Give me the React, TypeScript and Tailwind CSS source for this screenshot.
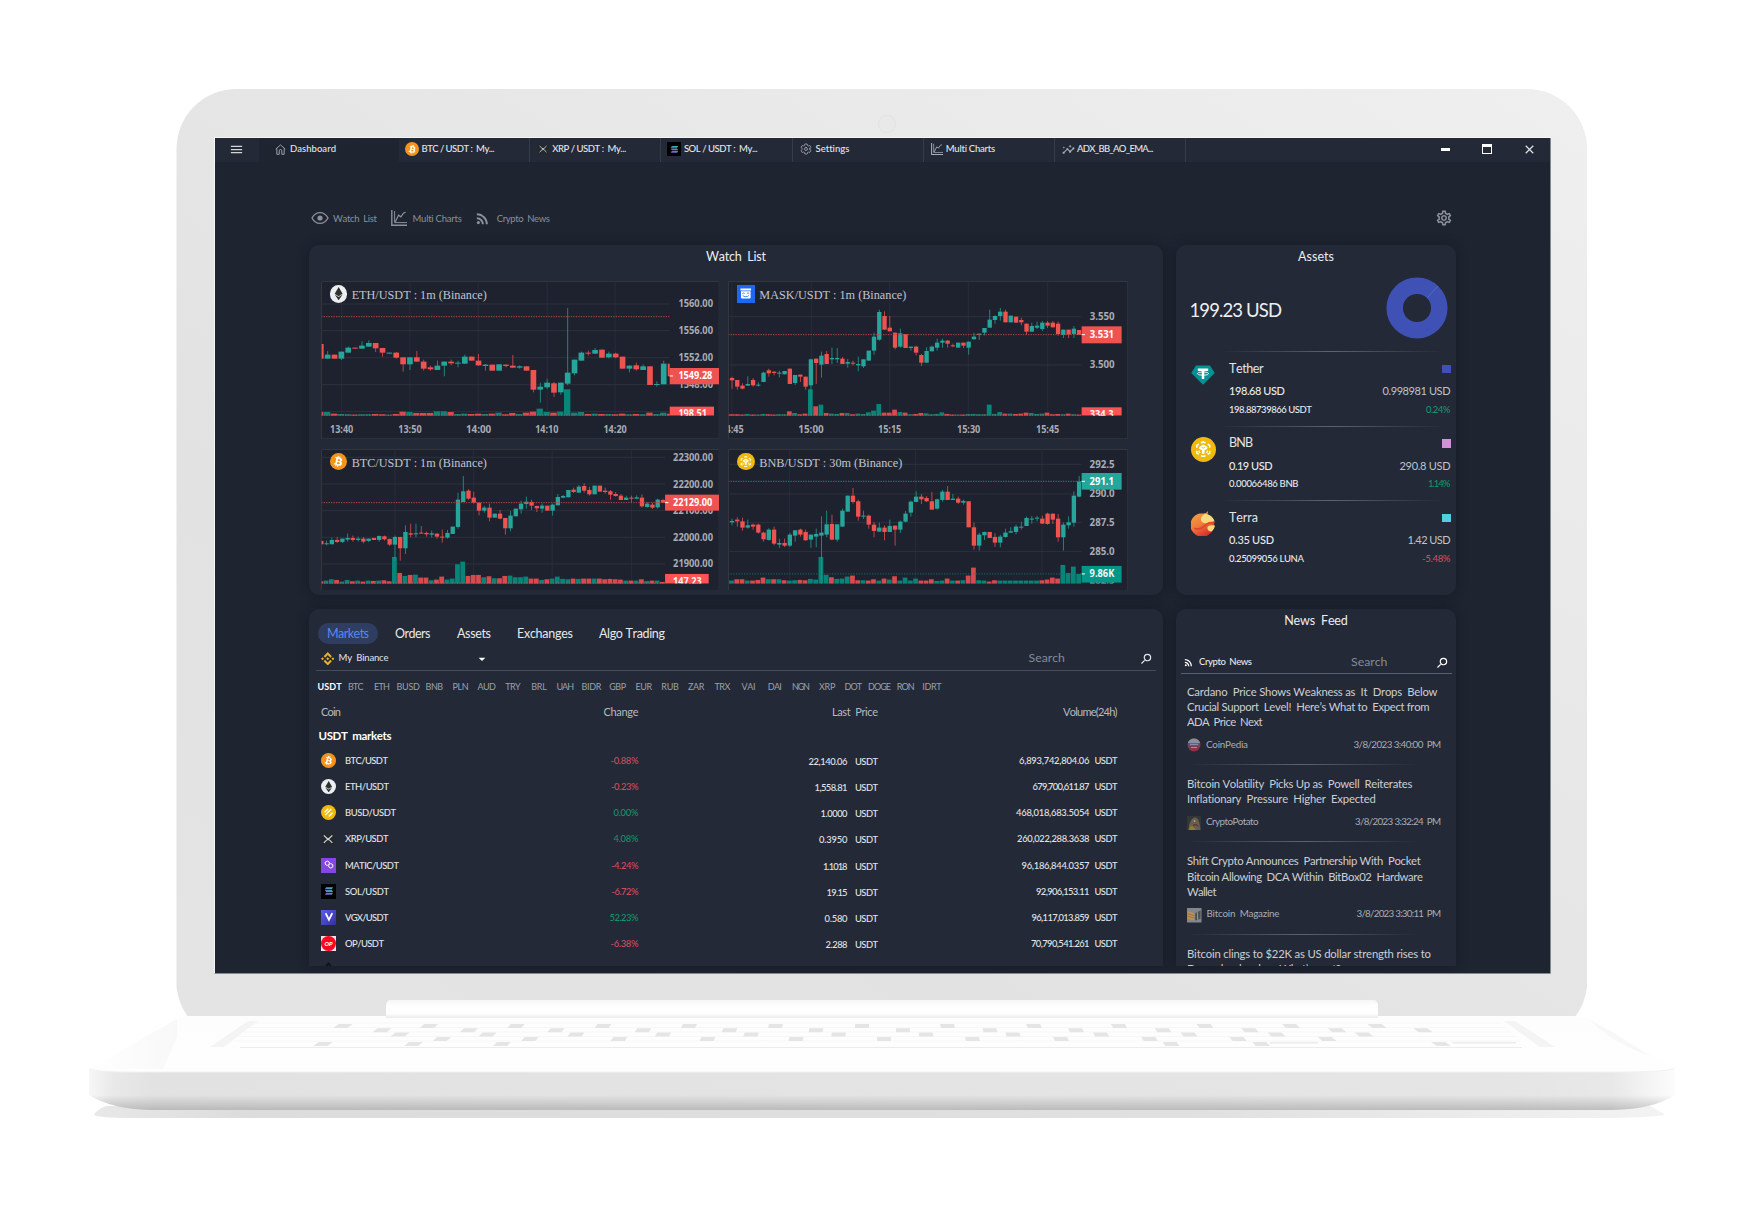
import { useLayoutEffect, useRef, type ReactNode } from "react";
import {
  MdMenu,
  MdInsights,
  MdOutlineSettings,
  MdRssFeed,
  MdSearch,
  MdArrowDropDown,
} from "react-icons/md";
import { IoSettingsOutline } from "react-icons/io5";
import { FaBtc, FaEthereum } from "react-icons/fa";

/* Text set to an exact measure: tracking is adjusted so the line fills w pixels. */
function Fit({ w, className = "", children }: { w: number; className?: string; children: string }) {
  const ref = useRef<HTMLSpanElement>(null);
  useLayoutEffect(() => {
    const el = ref.current;
    if (!el) return;
    el.style.letterSpacing = "0px";
    const natural = el.getBoundingClientRect().width;
    const gaps = Math.max(1, children.length - 1);
    const s = (w - natural) / gaps;
    el.style.letterSpacing = `${s}px`;
    el.style.marginRight = `${-s}px`;
  }, [w, children]);
  return (
    <span ref={ref} className={`inline-block shrink-0 whitespace-pre ${className}`}>
      {children}
    </span>
  );
}

/* ---------- icons ---------- */

function HomeIcon() {
  return (
    <svg viewBox="0 0 12 12" className="size-[11px] text-[#a9adb5]" fill="none" stroke="currentColor" strokeWidth="1">
      <path d="M.8 5.6 6 1l5.2 4.6M2 4.8V11.2h2.6V7.4a1.4 1.4 0 0 1 2.8 0v3.8H10V4.8" />
    </svg>
  );
}

function EyeIcon() {
  return (
    <svg viewBox="0 0 18 14" className="h-[14px] w-[18px]" fill="none" stroke="currentColor" strokeWidth="1.4">
      <path d="M1 7C3 3.4 5.8 1.6 9 1.6S15 3.4 17 7c-2 3.6-4.800 5.400-8 5.400S3 10.600 1 7Z" />
      <circle cx="9" cy="7" r="2.6" fill="currentColor" stroke="none" />
    </svg>
  );
}

function ChartIcon({ className }: { className: string }) {
  return (
    <svg viewBox="0 0 16 16" className={className} fill="none" stroke="currentColor">
      <path d="M.8 0v15.300H16" strokeWidth="1.4" />
      <path d="M3.600 1v11.600H16" strokeWidth="1" />
      <path d="M4.200 12 7.600 5.200l2.300 1.600L12.600 3l2-.6" strokeWidth="1.2" />
    </svg>
  );
}

type Coin = "btc" | "eth" | "busd" | "xrp" | "matic" | "sol" | "vgx" | "op" | "bnb" | "mask" | "tether" | "terra";

function BinanceMark({ className, color }: { className: string; color: string }) {
  return (
    <svg viewBox="0 0 24 24" className={className} fill={color}>
      <path d="m7.400 10.100 4.600-4.600 4.600 4.600 2.700-2.700L12 0 4.700 7.400zM0 12l2.700-2.700L5.400 12l-2.700 2.700zM7.400 13.900l4.600 4.600 4.600-4.600 2.700 2.700L12 24l-7.300-7.400zM18.600 12l2.700-2.700L24 12l-2.700 2.700zM14.700 12 12 9.300 9.300 12l2.700 2.700z" />
    </svg>
  );
}

function CoinIcon({ coin, size }: { coin: Coin; size: string }) {
  const box = `${size} shrink-0 flex items-center justify-center`;
  switch (coin) {
    case "btc":
      return (
        <span className={`${box} rounded-full bg-[#f7931a] text-white`}>
          <FaBtc className="size-[62%] rotate-[14deg]" />
        </span>
      );
    case "eth":
      return (
        <span className={`${box} rounded-full bg-[#eceff0] text-[#2f3030]`}>
          <FaEthereum className="size-[76%]" />
        </span>
      );
    case "busd":
      return (
        <span className={`${box} rounded-full bg-[#f0b90b]`}>
          <svg viewBox="0 0 24 24" className="size-[74%]" fill="none" stroke="#fff" strokeWidth="3">
            <path d="m3.500 11.500 8-8M5 17.500 18 4.500M12.500 20.500l8-8" />
          </svg>
        </span>
      );
    case "xrp":
      return (
        <span className={`${box} bg-[#23292f]`}>
          <svg viewBox="0 0 24 24" className="size-[68%]" fill="none" stroke="#d5d7da" strokeWidth="2.600">
            <path d="M2 3l6.500 6.400a5 5 0 0 0 7 0L22 3M2 21l6.500-6.400a5 5 0 0 1 7 0L22 21" />
          </svg>
        </span>
      );
    case "matic":
      return (
        <span className={`${box} bg-[#8247e5]`}>
          <svg viewBox="0 0 24 24" className="size-[80%]" fill="none" stroke="#fff" strokeWidth="2">
            <path d="M12.500 9.500V6.200L8.500 4 4.500 6.200v4.600L8.500 13l7-4 4 2.300v4.600l-4 2.300-4-2.300v-3.300" strokeLinejoin="round" />
          </svg>
        </span>
      );
    case "sol":
      return (
        <span className={`${box} bg-black`}>
          <svg viewBox="0 0 24 24" className="size-[66%]">
            <defs>
              <linearGradient id="sol" x1="0" y1="1" x2="1" y2="0">
                <stop offset="0" stopColor="#8a4dd8" />
                <stop offset="1" stopColor="#25c9a5" />
              </linearGradient>
            </defs>
            <path fill="url(#sol)" d="M5 3h17l-3 4.600H2zM2 9.700h17l3 4.600H5zM5 16.400h17L19 21H2z" />
          </svg>
        </span>
      );
    case "vgx":
      return (
        <span className={`${box} bg-linear-to-br from-[#5a5df5] to-[#352f9c]`}>
          <svg viewBox="0 0 24 24" className="size-[66%]" fill="none" stroke="#fff" strokeWidth="4.400">
            <path d="M4 3l8 16 8-16" />
          </svg>
        </span>
      );
    case "op":
      return (
        <span className={`${box} bg-[#f3dfe0]`}>
          <span className="flex size-full items-center justify-center rounded-full bg-[#ff0420] text-[6px] leading-none font-black text-white italic">
            OP
          </span>
        </span>
      );
    case "bnb":
      return (
        <span className={`${box} rounded-full bg-[#f0b90b]`}>
          <svg viewBox="0 0 24 24" className="size-[66%]" fill="none" stroke="#fff" strokeWidth="2.200">
            <path d="M8.700 2.900 12 1.100l3.300 1.800M2.600 9.800V6.400l3-1.700M21.400 9.800V6.400l-3-1.700M2.600 14.200v3.400l3 1.700M21.400 14.200v3.400l-3 1.700M8.700 21.100l3.300 1.800 3.300-1.800" />
            <path d="M12 5.200 18 8.600v2.600L14 13.500v4.400l-2 1.200-2-1.200v-4.400L6 11.200V8.600z" fill="#fff" stroke="none" />
            <path d="m9.500 9 2.500 1.500L14.500 9" stroke="#f0b90b" strokeWidth="1.300" />
            <path d="M6 13.800v2.200l1.600 1M18 13.800v2.200l-1.600 1" strokeWidth="1.800" />
          </svg>
        </span>
      );
    case "mask":
      return (
        <span className={`${box} bg-[#1c68f3]`}>
          <svg viewBox="0 0 24 24" className="size-[66%]">
            <path d="M1 1h22v4H1zM2 6.500h20V20a2 2 0 0 1-2 2H4a2 2 0 0 1-2-2z" fill="#fff" />
            <path d="M4.500 12c1.500-2 4-2 5.500 0M14 12c1.500-2 4-2 5.500 0M5.500 15.500c3 3.400 10 3.400 13 0" fill="none" stroke="#1c68f3" strokeWidth="1.700" />
          </svg>
        </span>
      );
    case "tether":
      return (
        <svg viewBox="0 0 24 20" className={size}>
          <path d="M5 .4h14L23.700 8 12 19.700.3 8z" fill="#009393" />
          <path d="M6.800 3.400h10.400v2.500H13.300v8.100h-2.600V5.900H6.800z" fill="#fff" />
          <ellipse cx="12" cy="8.600" rx="5.600" ry="1.600" fill="none" stroke="#fff" strokeWidth=".9" />
        </svg>
      );
    case "terra":
      return (
        <svg viewBox="0 0 24 24" className={size}>
          <defs>
            <linearGradient id="terra" x1="0" y1="0" x2=".5" y2="1">
              <stop offset="0" stopColor="#f5a848" />
              <stop offset=".6" stopColor="#ef7a3a" />
              <stop offset="1" stopColor="#d9322b" />
            </linearGradient>
          </defs>
          <path d="M12 2.400c1.500 0 3-.7 4.300-2.400.2 1.500 0 2.400-.8 3.200A11.300 11.300 0 1 1 8 2.500z" fill="url(#terra)" />
          <path d="M14 2.600a11 11 0 0 1 8.700 7.600c-3 .6-5 .6-7 1.500-2.500.8-6.200-.7-6.200-3.700 0-2.500 2-4.600 4.500-5.400Z" fill="#f7da7c" />
          <path d="M23 14c-.4 2.400-1.400 4.200-2.900 5.500-2.300.4-4.600-1.200-4.400-3.300.2-2.200 3-3.300 7.300-2.200Z" fill="#f7da7c" />
          <path d="M3 16.500c6 2.500 9-1.500 12-4 2.500-1.600 5-1.600 7.700-1.500" fill="none" stroke="#e0442f" strokeWidth="1.600" />
        </svg>
      );
  }
}

/* ---------- candlestick charts ---------- */

type Candle = [up: 0 | 1, top: number, bottom: number, high: number, low: number, vol: number];

type ChartSpec = {
  title: string;
  titleW: number;
  coin: Coin;
  box: [number, number, number, number];
  right: number;
  base: number;
  x0: number;
  step: number;
  body: number;
  h: number[];
  v: number[];
  times: [number, string][];
  prices: [number, string][];
  labelX: number;
  labelW: number;
  price: number;
  up: boolean;
  tag: { y: number; h: number; w: number; text: string };
  volTag: { y: number; h: number; w: number; text: string; tw: number };
  volLine?: number;
  lineY?: number;
  candles: Candle[];
};

const eth: Candle[] = [
  [0, 310, 354, 310, 354, 514], [1, 342, 354, 331, 354, 514], [0, 342, 354, 342, 354, 519], [1, 333, 354, 333, 358, 520],
  [1, 321, 336, 318, 336, 521], [0, 321, 324, 321, 324, 522], [1, 315, 324, 302, 325, 521], [1, 307, 318, 299, 318, 521],
  [0, 307, 323, 307, 334, 520], [0, 322, 336, 322, 348, 521], [1, 336, 339, 336, 339, 522], [0, 336, 351, 334, 354, 520],
  [0, 350, 371, 350, 393, 513], [1, 350, 371, 350, 388, 514], [0, 350, 363, 331, 363, 517], [0, 363, 384, 357, 390, 517],
  [0, 380, 386, 375, 390, 517], [1, 375, 388, 360, 388, 512], [1, 363, 375, 362, 407, 512], [0, 363, 368, 357, 374, 514],
  [1, 366, 368, 360, 380, 520], [1, 348, 369, 342, 370, 519], [0, 348, 360, 348, 360, 520], [0, 360, 374, 340, 376, 519],
  [1, 372, 376, 370, 390, 520], [0, 372, 390, 372, 390, 519], [1, 371, 390, 371, 390, 516], [0, 372, 376, 371, 380, 521],
  [0, 375, 381, 343, 381, 517], [1, 377, 381, 374, 384, 520], [0, 377, 390, 377, 390, 516], [0, 388, 447, 388, 455, 513],
  [1, 438, 447, 426, 486, 504], [1, 426, 440, 414, 445, 514], [0, 428, 456, 424, 469, 516], [1, 426, 455, 426, 462, 513],
  [1, 396, 429, 202, 434, 446], [1, 357, 398, 357, 404, 516], [1, 336, 360, 333, 360, 514], [0, 336, 339, 330, 345, 520],
  [1, 328, 339, 322, 339, 519], [0, 327, 351, 327, 351, 520], [1, 339, 350, 333, 353, 520], [0, 339, 350, 336, 353, 521],
  [0, 348, 384, 348, 384, 519], [1, 375, 384, 374, 395, 521], [0, 374, 386, 366, 390, 520], [1, 377, 388, 371, 388, 521],
  [0, 377, 433, 377, 433, 516], [1, 430, 433, 422, 438, 520], [1, 369, 431, 360, 431, 516], [0, 369, 407, 367, 407, 519],
];

const mask: Candle[] = [
  [0, 412, 419, 408, 445, 521], [0, 418, 438, 418, 447, 521], [0, 435, 444, 428, 446, 522], [1, 430, 435, 407, 435, 520],
  [0, 418, 434, 412, 438, 522], [1, 432, 435, 425, 438, 522], [1, 396, 424, 393, 424, 520], [0, 389, 398, 384, 408, 521],
  [0, 393, 397, 393, 404, 522], [1, 396, 399, 390, 410, 521], [1, 391, 401, 391, 401, 521], [0, 384, 430, 384, 430, 512],
  [1, 403, 427, 403, 433, 517], [0, 402, 408, 402, 424, 521], [0, 408, 438, 408, 447, 519], [1, 356, 434, 354, 525, 446],
  [0, 354, 367, 354, 430, 497], [1, 345, 372, 333, 411, 492], [0, 340, 370, 331, 370, 517], [1, 352, 356, 321, 370, 519],
  [1, 352, 356, 322, 367, 520], [0, 354, 370, 349, 370, 517], [1, 364, 369, 355, 381, 517], [0, 366, 369, 360, 374, 521],
  [1, 370, 374, 348, 392, 519], [1, 356, 377, 356, 382, 520], [1, 330, 360, 330, 360, 515], [1, 288, 330, 276, 342, 510],
  [1, 214, 297, 207, 300, 490], [0, 226, 267, 212, 267, 516], [0, 261, 272, 226, 272, 516], [0, 276, 321, 276, 326, 507],
  [1, 278, 318, 264, 321, 514], [0, 280, 322, 280, 322, 516], [1, 318, 322, 318, 330, 521], [0, 318, 336, 315, 344, 520],
  [0, 343, 366, 340, 376, 517], [1, 331, 366, 320, 366, 518], [1, 318, 332, 315, 332, 521], [1, 306, 321, 294, 330, 520],
  [1, 300, 306, 294, 321, 515], [0, 300, 309, 298, 321, 520], [0, 314, 317, 309, 320, 522], [1, 306, 321, 306, 321, 522],
  [0, 306, 315, 306, 322, 522], [1, 303, 321, 303, 342, 520], [1, 288, 296, 276, 296, 520], [1, 279, 283, 279, 298, 521],
  [1, 262, 276, 262, 284, 521], [1, 237, 261, 207, 261, 492], [1, 226, 238, 224, 249, 520], [1, 213, 226, 202, 240, 514],
  [0, 213, 245, 207, 245, 519], [1, 225, 245, 225, 245, 519], [0, 228, 246, 228, 246, 520], [0, 238, 245, 231, 254, 519],
  [0, 249, 273, 249, 282, 516], [1, 256, 273, 246, 273, 517], [1, 255, 261, 243, 265, 520], [1, 246, 265, 241, 271, 519],
  [0, 246, 255, 241, 262, 516], [0, 246, 260, 241, 260, 521], [0, 249, 280, 243, 285, 520], [1, 267, 283, 267, 292, 521],
  [0, 267, 282, 267, 292, 519], [1, 264, 280, 256, 292, 521], [0, 268, 283, 268, 283, 522],
];

const btc: Candle[] = [
  [0, 331, 341, 331, 341, 452], [1, 338, 341, 330, 344, 450], [1, 328, 341, 321, 341, 446], [0, 328, 334, 319, 337, 448],
  [1, 324, 334, 324, 337, 453], [1, 322, 327, 309, 333, 448], [0, 322, 328, 315, 333, 452], [1, 324, 328, 318, 333, 450],
  [0, 324, 333, 319, 338, 453], [1, 324, 331, 324, 334, 450], [0, 322, 328, 322, 328, 451], [1, 316, 328, 315, 333, 450],
  [0, 317, 326, 315, 330, 449], [0, 325, 342, 324, 346, 452], [1, 319, 342, 315, 390, 379], [0, 319, 353, 319, 390, 427],
  [1, 304, 353, 284, 370, 436], [0, 308, 312, 279, 320, 433], [1, 308, 311, 279, 320, 432], [0, 306, 309, 286, 309, 441],
  [0, 307, 311, 303, 318, 441], [1, 308, 312, 300, 321, 449], [0, 309, 318, 309, 324, 447], [0, 318, 321, 297, 336, 438],
  [1, 307, 321, 298, 324, 447], [1, 288, 310, 288, 310, 444], [1, 207, 289, 186, 294, 401], [1, 182, 214, 136, 214, 393],
  [0, 180, 204, 176, 207, 436], [0, 201, 216, 183, 219, 433], [0, 216, 240, 216, 254, 433], [1, 231, 240, 226, 246, 440],
  [0, 231, 261, 219, 272, 437], [1, 249, 261, 249, 261, 443], [0, 249, 264, 238, 266, 443], [0, 262, 293, 262, 312, 436],
  [1, 255, 293, 241, 302, 435], [1, 234, 257, 234, 257, 440], [1, 219, 236, 210, 249, 440], [1, 213, 220, 198, 234, 438],
  [0, 214, 225, 207, 238, 444], [0, 226, 233, 225, 244, 444], [1, 225, 234, 219, 246, 448], [0, 225, 240, 225, 240, 446],
  [1, 222, 240, 219, 255, 444], [1, 199, 224, 190, 224, 438], [1, 196, 201, 193, 203, 445], [1, 178, 200, 178, 200, 446],
  [0, 177, 184, 171, 187, 444], [1, 168, 186, 163, 186, 445], [0, 166, 180, 158, 186, 444], [0, 178, 191, 168, 195, 444],
  [1, 165, 191, 165, 191, 444], [0, 165, 183, 165, 183, 444], [0, 180, 184, 171, 189, 446], [0, 182, 192, 178, 207, 445],
  [0, 190, 196, 184, 198, 446], [0, 195, 208, 190, 208, 447], [1, 201, 208, 195, 208, 450], [0, 201, 204, 195, 214, 450],
  [1, 200, 204, 194, 206, 450], [0, 201, 227, 191, 231, 446], [1, 219, 229, 214, 231, 451], [0, 222, 231, 216, 235, 450],
  [1, 207, 230, 204, 234, 450], [0, 208, 217, 205, 217, 454],
];

const bnb: Candle[] = [
  [1, 271, 275, 264, 284, 450], [0, 267, 272, 260, 288, 446], [0, 272, 291, 261, 300, 446], [1, 284, 291, 267, 294, 450],
  [0, 282, 288, 279, 297, 450], [0, 282, 306, 279, 309, 448], [0, 306, 326, 303, 333, 441], [1, 297, 328, 293, 330, 446],
  [0, 297, 339, 288, 344, 446], [1, 337, 342, 324, 352, 446], [0, 337, 345, 324, 349, 449], [1, 312, 345, 307, 349, 450],
  [1, 299, 315, 299, 333, 449], [0, 297, 312, 294, 318, 448], [0, 304, 329, 297, 330, 449], [1, 312, 327, 312, 352, 445],
  [1, 310, 318, 294, 350, 447], [1, 306, 315, 257, 459, 379], [1, 281, 312, 240, 320, 433], [0, 280, 327, 252, 329, 440],
  [1, 281, 327, 281, 333, 445], [1, 240, 288, 234, 288, 444], [1, 195, 243, 195, 243, 438], [0, 195, 214, 172, 219, 435],
  [0, 212, 258, 207, 270, 449], [1, 255, 258, 240, 265, 449], [0, 255, 282, 252, 294, 450], [0, 282, 301, 274, 320, 446],
  [1, 291, 303, 276, 303, 450], [0, 291, 304, 284, 329, 444], [1, 286, 304, 267, 304, 447], [0, 285, 297, 285, 345, 437],
  [1, 273, 297, 270, 307, 450], [1, 249, 273, 241, 275, 441], [1, 213, 246, 210, 258, 450], [1, 198, 214, 182, 214, 444],
  [0, 198, 206, 190, 220, 450], [0, 202, 212, 196, 214, 450], [0, 212, 237, 184, 237, 446], [1, 206, 234, 204, 237, 451],
  [1, 183, 208, 177, 213, 450], [0, 183, 208, 166, 208, 444], [1, 204, 208, 190, 208, 450], [0, 204, 216, 198, 220, 450],
  [1, 211, 216, 207, 222, 449], [0, 212, 290, 212, 290, 435], [0, 290, 345, 276, 357, 411], [1, 312, 345, 306, 360, 449],
  [1, 304, 314, 303, 328, 450], [0, 304, 322, 304, 322, 453], [0, 319, 336, 308, 349, 449], [1, 318, 336, 313, 350, 450],
  [1, 306, 319, 294, 321, 450], [1, 302, 306, 290, 306, 450], [1, 288, 304, 282, 311, 450], [1, 288, 291, 273, 297, 450],
  [1, 262, 286, 258, 286, 450], [1, 264, 267, 256, 279, 450], [1, 261, 264, 256, 272, 450], [0, 264, 279, 255, 280, 449],
  [0, 249, 280, 246, 282, 447], [0, 249, 267, 249, 280, 441], [0, 264, 320, 250, 333, 444], [1, 282, 320, 276, 360, 403],
  [1, 275, 284, 257, 294, 427], [1, 195, 276, 182, 288, 408], [1, 152, 198, 136, 200, 430],
];

const charts: ChartSpec[] = [
  {
    title: "ETH/USDT : 1m (Binance)", titleW: 406, coin: "eth", box: [62, 121, 1197, 475], right: 1109, base: 525,
    x0: 61.4, step: 20.59, body: 17, h: [190, 270, 351, 432, 513], v: [124, 329, 534, 741, 945],
    times: [[124, "13:40"], [329, "13:50"], [535, "14:00"], [740, "14:10"], [945, "14:20"]],
    prices: [[200, "1560.00"], [280, "1556.00"], [361, "1552.00"], [443, "1548.00"]],
    labelX: 1135, labelW: 104, price: 406, lineY: 228, up: false,
    tag: { y: 382, h: 49, w: 148, text: "1549.28" }, volTag: { y: 498, h: 27, w: 133, text: "198.51", tw: 86 }, candles: eth,
  },
  {
    title: "MASK/USDT : 1m (Binance)", titleW: 441, coin: "mask", box: [25, 121, 1201, 475], right: 1086, base: 525,
    x0: 37, step: 15.78, body: 13, h: [228, 373], v: [37, 275, 510, 746, 984],
    times: [[37, "14:45"], [274, "15:00"], [510, "15:15"], [747, "15:30"], [984, "15:45"]],
    prices: [[237, "3.550"], [383, "3.500"]],
    labelX: 1110, labelW: 75, price: 282, up: false,
    tag: { y: 257, h: 51, w: 120, text: "3.531" }, volTag: { y: 500, h: 25, w: 120, text: "334.3", tw: 72 }, candles: mask,
  },
  {
    title: "BTC/USDT : 1m (Binance)", titleW: 406, coin: "btc", box: [62, 55, 1197, 425], right: 1095, base: 459,
    x0: 63, step: 15.78, body: 13, h: [80, 160, 240, 320, 400], v: [284, 520, 756, 994], times: [],
    prices: [[91, "22300.00"], [171, "22200.00"], [250, "22100.00"], [331, "22000.00"], [410, "21900.00"]],
    labelX: 1119, labelW: 120, price: 216, up: false,
    tag: { y: 192, h: 48, w: 162, text: "22129.00" }, volTag: { y: 430, h: 30, w: 131, text: "147.23", tw: 86 }, candles: btc,
  },
  {
    title: "BNB/USDT : 30m (Binance)", titleW: 429, coin: "bnb", box: [25, 55, 1201, 425], right: 1086, base: 459,
    x0: 37, step: 15.78, body: 13, h: [101, 190, 276, 363], v: [210, 588, 967], times: [],
    prices: [[112, "292.5"], [200, "290.0"], [286, "287.5"], [374, "285.0"], [459, "282.5"]],
    labelX: 1110, labelW: 75, price: 152, up: true,
    tag: { y: 127, h: 50, w: 120, text: "291.1" }, volTag: { y: 406, h: 50, w: 120, text: "9.86K", tw: 74 }, volLine: 430, candles: bnb,
  },
];

function CandleChart({ c }: { c: ChartSpec }) {
  const [bx, by, bw, bh] = c.box;
  const tag = c.up ? "#26a69a" : "#ef5350";
  const volTagColor = c.up ? "#009688" : "#ff5252";
  const id = c.coin;
  const tall = c.times.length > 0;
  const lineY = c.lineY ?? c.price;
  return (
    <div className="relative">
      <svg
        viewBox={`${bx} ${by} ${bw} ${bh}`}
        preserveAspectRatio="none"
        className={tall ? "block h-[158.3px] w-full" : "block h-[141.6px] w-full"}
      >
        <defs>
          <clipPath id={`plot-${id}`}>
            <rect x={bx + 2} y={by} width={c.right - bx - 2} height={bh} />
          </clipPath>
          <clipPath id={`upper-${id}`}>
            <rect x={bx} y={by} width={bw} height={c.base - by} />
          </clipPath>
        </defs>
        <rect x={bx} y={by} width={bw} height={bh} fill="#1e222f" />
        <path
          d={`M${bx + 1.500} ${by + bh}V${by + 1.500}H${bx + bw - 1.500}V${by + bh}${tall ? `M${bx} ${by + bh - 1.500}H${bx + bw}` : ""}`}
          fill="none" stroke="#33383d" strokeWidth="3"
        />
        <g clipPath={`url(#plot-${id})`}>
          {c.v.map((x) => (
            <path key={x} d={`M${x} ${by + 3}V${c.base}`} stroke="#292a39" strokeWidth="3" />
          ))}
          {c.h.map((y) => (
            <path key={y} d={`M${bx} ${y}H${c.right}`} stroke="#2c313d" strokeWidth="3" />
          ))}
          {c.candles.map(([up, top, bottom, high, low, vol], i) => {
            const x = c.x0 + i * c.step;
            return (
              <g key={i}>
                <rect x={x - c.step / 2 - 0.800} y={vol} width={c.step - 1.500} height={c.base - vol} fill={up ? "#078579" : "#d74a4e"} />
                <rect x={x - 1.200} y={high} width="2.600" height={Math.max(0, low - high)} fill={up ? "#229186" : "#d04a4b"} />
                <rect x={x - c.body / 2} y={top} width={c.body} height={Math.max(3, bottom - top)} fill={up ? "#26a69a" : "#ef5350"} />
              </g>
            );
          })}
          <path d={`M${bx} ${lineY}H${c.right}`} stroke={c.up ? "#26877f" : "#b64649"} strokeWidth="3" strokeDasharray="4 3.500" />
          <path
            d={`M${bx} ${c.volLine ?? c.base - 1.500}H${c.right}`}
            stroke={c.up ? "#14756e" : "#e0504f"} strokeWidth="2.400" strokeDasharray="4 4"
          />
        </g>
        <g fontFamily="Open Sans, sans-serif" fontWeight="700" fontSize="30" fill="#a9acb3">
          <g clipPath={`url(#upper-${id})`}>
            {c.prices.map(([y, t]) => (
              <text key={t} x={c.labelX} y={y} textLength={c.labelW} lengthAdjust="spacingAndGlyphs">{t}</text>
            ))}
          </g>
          {c.times.map(([x, t], i) => (
            <text
              key={t} x={t.endsWith(":00") ? x - 38 : x - 35} y="576" textLength={t.endsWith(":00") ? 76 : 70}
              lengthAdjust="spacingAndGlyphs" clipPath={i === 0 ? `url(#plot-${id})` : undefined}
            >
              {t}
            </text>
          ))}
          <g clipPath={`url(#upper-${id})`}>
            <rect x={c.right} y={c.volTag.y} width={c.volTag.w} height={c.volTag.h} fill={volTagColor} />
            <text
              x={c.labelX} y={c.up ? 438 : c.volTag.y + 32} fill="#f5f5f5"
              textLength={c.volTag.tw} lengthAdjust="spacingAndGlyphs"
            >
              {c.volTag.text}
            </text>
            {c.up && <path d={`M${c.right} 430h10`} stroke="#fff" strokeWidth="3" />}
          </g>
          <rect x={c.right} y={c.tag.y} width={c.tag.w} height={c.tag.h} fill={tag} />
          <path d={`M${c.right} ${c.price}h10`} stroke="#fff" strokeWidth="3" />
          <text x={c.labelX} y={c.price + 10} fill="#fff" textLength={c.labelW - 2} lengthAdjust="spacingAndGlyphs">
            {c.tag.text}
          </text>
        </g>
        <text
          x={bx === 62 ? 154 : 119} y={by + 55} fill="#c0c4d0" fontFamily="Liberation Serif, serif" fontSize="36"
          textLength={c.titleW} lengthAdjust="spacingAndGlyphs"
        >
          {c.title}
        </text>
      </svg>
      <span className="absolute top-[4px] left-[9px]">
        <CoinIcon coin={c.coin} size="size-[17.500px]" />
      </span>
    </div>
  );
}

/* ---------- window chrome ---------- */

function Tab({ icon, label, w, pl, gap }: { icon: ReactNode; label: string; w: number; pl: string; gap: string }) {
  return (
    <div className={`flex w-[131.200px] shrink-0 items-center border-r border-[#353d4a] pb-[2px] text-[#e4e6ea] ${pl} ${gap}`}>
      {icon}
      <Fit w={w} className="text-[9.500px] font-medium">{label}</Fit>
    </div>
  );
}

function TitleBar() {
  return (
    <div className="flex h-6 bg-[#232936] text-[#e4e6ea]">
      <div className="flex w-[43.500px] items-center pb-[2px] pl-[13.500px]">
        <MdMenu className="size-[15px] text-[#d2d4d8]" />
      </div>
      <div className="flex w-[140.500px] items-center gap-1 bg-[#1e2430] pb-[2px] pl-[16.500px]">
        <HomeIcon />
        <Fit w={46} className="text-[9.500px] font-medium">Dashboard</Fit>
      </div>
      <Tab icon={<CoinIcon coin="btc" size="size-[14px]" />} label="BTC / USDT :  My..." w={73} pl="pl-[6px]" gap="gap-[2.500px]" />
      <Tab icon={<CoinIcon coin="xrp" size="size-[12px]" />} label="XRP / USDT :  My..." w={74} pl="pl-[7px]" gap="gap-[3px]" />
      <Tab icon={<CoinIcon coin="sol" size="size-[13.500px]" />} label="SOL / USDT :  My..." w={74} pl="pl-[6px]" gap="gap-[3px]" />
      <Tab icon={<IoSettingsOutline className="size-[12px] text-[#b4b8bf]" />} label="Settings" w={33.5} pl="pl-[7px]" gap="gap-[4px]" />
      <Tab icon={<ChartIcon className="size-[12px] text-[#a9adb5]" />} label="Multi Charts" w={49.5} pl="pl-[7px]" gap="gap-[3px]" />
      <Tab icon={<MdInsights className="size-[13px] text-[#a9adb5]" />} label="ADX_BB_AO_EMA..." w={76.5} pl="pl-[7px]" gap="gap-[2px]" />
      <div className="ml-auto flex pb-[2px]">
        <span className="flex w-[42px] items-center justify-center"><i className="h-[3px] w-[9px] bg-white" /></span>
        <span className="flex w-[42px] items-center justify-center"><i className="h-[10px] w-[10px] border border-t-[3px] border-white" /></span>
        <span className="flex w-[42px] items-center justify-center">
          <svg viewBox="0 0 10 10" className="size-[9px]" stroke="#e4e6e9" strokeWidth="1.300"><path d="m.8.8 8.400 8.400M9.200.8.8 9.200" /></svg>
        </span>
      </div>
    </div>
  );
}

/* ---------- panels ---------- */

const currencies: [string, number][] = [
  ["USDT", 24], ["BTC", 15.5], ["ETH", 16], ["BUSD", 23.5], ["BNB", 17.500], ["PLN", 16], ["AUD", 18.500], ["TRY", 15.500],
  ["BRL", 15.500], ["UAH", 17.500], ["BIDR", 20], ["GBP", 17], ["EUR", 16.500], ["RUB", 17.500], ["ZAR", 16.500], ["TRX", 16],
  ["VAI", 14], ["DAI", 14], ["NGN", 18], ["XRP", 16.500], ["DOT", 17.500], ["DOGE", 23], ["RON", 18], ["IDRT", 19.500],
];

type Market = { coin: Coin; pair: string; pw: number; change: string; cw: number; price: string; prw: number; vol: string; vw: number };

const markets: Market[] = [
  { coin: "btc", pair: "BTC/USDT", pw: 43, change: "-0.88%", cw: 28, price: "22,140.06", prw: 39, vol: "6,893,742,804.06", vw: 70.5 },
  { coin: "eth", pair: "ETH/USDT", pw: 44, change: "-0.23%", cw: 27.500, price: "1,558.81", prw: 33, vol: "679,700,611.87", vw: 57 },
  { coin: "busd", pair: "BUSD/USDT", pw: 51, change: "0.00%", cw: 25, price: "1.0000", prw: 27, vol: "468,018,683.5054", vw: 73.500 },
  { coin: "xrp", pair: "XRP/USDT", pw: 43.500, change: "4.08%", cw: 25, price: "0.3950", prw: 28.500, vol: "260,022,288.3638", vw: 72.500 },
  { coin: "matic", pair: "MATIC/USDT", pw: 54, change: "-4.24%", cw: 27.500, price: "1.1018", prw: 24.500, vol: "96,186,844.0357", vw: 68 },
  { coin: "sol", pair: "SOL/USDT", pw: 44, change: "-6.72%", cw: 27, price: "19.15", prw: 21, vol: "92,906,153.11", vw: 53.500 },
  { coin: "vgx", pair: "VGX/USDT", pw: 43.500, change: "52.23%", cw: 29, price: "0.580", prw: 23, vol: "96,117,013.859", vw: 58 },
  { coin: "op", pair: "OP/USDT", pw: 39, change: "-6.38%", cw: 28, price: "2.288", prw: 22, vol: "70,790,541.261", vw: 58.500 },
];

function MarketRow({ m }: { m: Market }) {
  return (
    <div className="grid h-[26.150px] grid-cols-[24px_180px_113.500px_239.500px_239.500px] items-center text-[9.400px] font-medium text-[#e2e4e8]">
      <CoinIcon coin={m.coin} size="size-[15px] -mt-[1px]" />
      <Fit w={m.pw} className="justify-self-start">{m.pair}</Fit>
      <Fit w={m.cw} className={m.change.startsWith("-") ? "justify-self-end text-[#cf4c61]" : "justify-self-end text-[#12936c]"}>{m.change}</Fit>
      <div className="flex justify-end gap-[7.500px] pt-[2px]">
        <Fit w={m.prw}>{m.price}</Fit>
        <Fit w={23}>USDT</Fit>
      </div>
      <div className="flex justify-end gap-[5px]">
        <Fit w={m.vw}>{m.vol}</Fit>
        <Fit w={23}>USDT</Fit>
      </div>
    </div>
  );
}

const panel = "overflow-hidden bg-[#232936] shadow-[0_0_12px_rgba(10,14,22,0.350)]";

function WatchList() {
  return (
    <section className={`${panel} rounded-[10px]`}>
      <div className="flex h-[36px] items-start justify-center pt-[3px]">
        <Fit w={60} className="text-[12.500px] text-[#eceef1]">Watch  List</Fit>
      </div>
      <div className="ml-[11.500px] grid grid-cols-[398.700px_400.300px] gap-x-[9px] gap-y-[9.500px]">
        {charts.map((c) => <CandleChart key={c.title} c={c} />)}
      </div>
    </section>
  );
}

function Divider({ className = "" }: { className?: string }) {
  return <div className={`h-px bg-linear-to-r from-transparent via-[#5c6471] to-transparent ${className}`} />;
}

type Asset = { coin: Coin; size: string; name: string; nw: number; value: string; vw: number; price: string; pw: number; amount: string; aw: number; change: string; cw: number; swatch: string };

const assets: Asset[] = [
  { coin: "tether", size: "h-[20px] w-[24px] mt-[12.500px]", name: "Tether", nw: 34.500, value: "198.68 USD", vw: 56, price: "0.998981 USD", pw: 68, amount: "198.88739866 USDT", aw: 83, change: "0.24%", cw: 24.500, swatch: "bg-[#3f51b5]" },
  { coin: "bnb", size: "size-[25px] mt-[10px]", name: "BNB", nw: 24, value: "0.19 USD", vw: 43.500, price: "290.8 USD", pw: 51, amount: "0.00066486 BNB", aw: 69.500, change: "1.14%", cw: 22.5, swatch: "bg-[#ce93d8]" },
  { coin: "terra", size: "size-[25px] mt-[10px]", name: "Terra", nw: 29, value: "0.35 USD", vw: 45, price: "1.42 USD", pw: 43, amount: "0.25099056 LUNA", aw: 75, change: "-5.48%", cw: 28.500, swatch: "bg-[#4dd0e1]" },
];

function AssetsPanel() {
  return (
    <section className={`${panel} rounded-[10px]`}>
      <div className="flex h-[31.500px] justify-center pt-[3px]">
        <Fit w={36} className="text-[12.500px] text-[#eceef1]">Assets</Fit>
      </div>
      <div className="flex h-[74.500px] items-start justify-between pr-[8px] pl-[13.500px]">
        <Fit w={92.5} className="mt-[20px] text-[18.500px] leading-[26px] text-[#eceef1]">199.23 USD</Fit>
        <svg viewBox="0 0 62 62" className="size-[62px]">
          <circle cx="31" cy="31" r="22.300" fill="none" stroke="#3f51b5" strokeWidth="16.500" />
          <path d="m41.500 20.500 10.500-11.500" stroke="#4a74c0" strokeWidth=".9" />
        </svg>
      </div>
      {assets.map((a) => (
        <div key={a.name} className="h-[74.500px]">
          <Divider className="ml-[43px] w-[225px]" />
          <div className="flex pl-[15px]">
            <div className="w-[38px]"><CoinIcon coin={a.coin} size={a.size} /></div>
            <div className="flex w-[221.500px] flex-col pt-[8px]">
              <div className="flex h-[18px] items-center justify-between">
                <Fit w={a.nw} className="text-[12.500px] text-[#e2e4e8]">{a.name}</Fit>
                <i className={`size-[8.500px] ${a.swatch}`} />
              </div>
              <div className="mt-[5px] flex h-[17px] items-center justify-between text-[11px]">
                <Fit w={a.vw} className="font-medium text-[#e8eaed]">{a.value}</Fit>
                <Fit w={a.pw} className="text-[#bfc3ca]">{a.price}</Fit>
              </div>
              <div className="mt-[3px] flex h-[14px] items-center justify-between text-[9.500px] font-medium">
                <Fit w={a.aw} className="text-[#e8eaed]">{a.amount}</Fit>
                <Fit w={a.cw} className={a.change.startsWith("-") ? "text-[#cf4c61]" : "text-[#12936c]"}>{a.change}</Fit>
              </div>
            </div>
          </div>
        </div>
      ))}
    </section>
  );
}

function Markets() {
  return (
    <section className={`${panel} h-[357px] rounded-t-[10px] text-[#dcdee2]`}>
      <nav className="mt-[14px] flex h-[21px] items-center pl-[9px] text-[12.500px] text-[#e6e8eb]">
        <span className="flex h-[20.500px] w-[60px] items-center justify-center rounded-full bg-[#2f3d60] pt-[1px] text-[#5c86ee]">
          <Fit w={42}>Markets</Fit>
        </span>
        <div className="flex pt-[2px]">
          <Fit w={35.5} className="ml-[17px]">Orders</Fit>
          <Fit w={34} className="ml-[26.500px]">Assets</Fit>
          <Fit w={56} className="ml-[26px]">Exchanges</Fit>
          <Fit w={66} className="ml-[26px]">Algo Trading</Fit>
        </div>
      </nav>
      <div className="ml-[7px] flex h-[27px] w-[839.500px] items-center border-b border-[#454c5a] pt-[3px] pl-[4.500px]">
        <BinanceMark className="size-[13.500px]" color="#e9ae26" />
        <Fit w={50} className="ml-[4.500px] text-[9.500px] font-medium">My  Binance</Fit>
        <MdArrowDropDown className="ml-[85px] size-[16px] text-white" />
        <Fit w={36.5} className="ml-auto text-[12.300px] text-[#858b97]">Search</Fit>
        <MdSearch className="mr-[2.500px] ml-[74px] size-[14px] -scale-x-100 text-[#e4e6e9]" />
      </div>
      <div className="ml-[7.500px] flex h-[32px] items-center text-[9px] text-[#9ba0aa]">
        {currencies.map(([name, w], i) => (
          <span key={name} className="flex w-[26.200px] shrink-0 justify-center">
            <Fit w={w} className={i === 0 ? "font-bold text-white" : ""}>{name}</Fit>
          </span>
        ))}
      </div>
      <div className="ml-[12px] grid h-[18px] grid-cols-[317.500px_239.500px_239.500px] items-center text-[11px] text-[#b6bac1]">
        <div className="flex justify-between"><Fit w={20}>Coin</Fit><Fit w={35}>Change</Fit></div>
        <Fit w={46} className="justify-self-end">Last  Price</Fit>
        <Fit w={54.5} className="justify-self-end">Volume(24h)</Fit>
      </div>
      <div className="ml-[9.500px] flex h-[27px] items-center pt-[2px]">
        <Fit w={73} className="text-[11.500px] font-bold text-white">USDT  markets</Fit>
      </div>
      <div className="ml-[12px]">
        {markets.map((m) => <MarketRow key={m.pair} m={m} />)}
        <div className="flex h-[26px] w-[15px] justify-center pt-[5px]">
          <svg viewBox="0 0 10 10" className="size-[7px]" fill="none" stroke="#0e1118" strokeWidth="2.500"><path d="M1 7 5 2l4 5" /></svg>
        </div>
      </div>
    </section>
  );
}

type Story = { lines: [string, number][]; source: string; sw: number; time: string; tw: number; thumb: "round" | "face" | "cube" };

const stories: Story[] = [
  {
    lines: [["Cardano  Price Shows Weakness as  It  Drops  Below", 250.5], ["Crucial Support  Level!  Here’s What to  Expect from", 242.5], ["ADA  Price  Next", 75.5]],
    source: "CoinPedia", sw: 42, time: "3/8/2023 3:40:00  PM", tw: 87.500, thumb: "round",
  },
  {
    lines: [["Bitcoin Volatility  Picks Up as  Powell  Reiterates", 225.5], ["Inflationary  Pressure  Higher  Expected", 189]],
    source: "CryptoPotato", sw: 52.500, time: "3/8/2023 3:32:24  PM", tw: 86, thumb: "face",
  },
  {
    lines: [["Shift Crypto Announces  Partnership With  Pocket", 233.5], ["Bitcoin Allowing  DCA Within  BitBox02  Hardware", 236], ["Wallet", 29.5]],
    source: "Bitcoin  Magazine", sw: 73, time: "3/8/2023 3:30:11  PM", tw: 84.500, thumb: "cube",
  },
];

function Thumb({ kind }: { kind: Story["thumb"] }) {
  if (kind === "round")
    return (
      <svg viewBox="0 0 14 14" className="mt-[2px] size-[14px]">
        <circle cx="7" cy="7" r="6.500" fill="#8e3346" />
        <path d="M.8 5a6.500 6.500 0 0 1 12.400 0z" fill="#8d8f98" />
        <path d="M1.500 5h11v3.200h-11z" fill="#3f5f8f" />
        <path d="M3 6.300h8M4 9.500h6" stroke="#b0a6b0" strokeWidth=".8" />
      </svg>
    );
  if (kind === "face")
    return (
      <svg viewBox="0 0 14 14" className="mt-[4px] size-[14px]">
        <rect width="14" height="14" fill="#30363a" />
        <path d="M1.500 14C2 6 5 1 8.500 1.500S13 9 13.500 14z" fill="#6a5d4a" />
        <path d="M2 14c0-3 2-5 4-3.500L9 14z" fill="#8a7c32" />
        <path d="M6 9.500c2-1.500 4-1 5.500 1" stroke="#3c2f38" fill="none" />
        <circle cx="7.500" cy="5" r="1" fill="#b09a80" />
      </svg>
    );
  return (
    <svg viewBox="0 0 15 15" className="mt-[3px] size-[14.500px]">
      <rect width="15" height="15" fill="#83868d" />
      <path d="m.5 3 7 2.500v7.500L.5 11z" fill="#c08f50" />
      <path d="M.5 5.800 7.500 8M.5 8.500l7 2" stroke="#8b6d47" strokeWidth=".8" />
      <path d="M8.500 5.500V13l5.500-2V2.500z" fill="#4a4e55" />
      <path d="M11 4.500v7.500" stroke="#9a9da3" />
    </svg>
  );
}

function NewsFeed() {
  return (
    <section className={`${panel} h-[357px] rounded-t-[10px] text-[#ccced4]`}>
      <div className="flex h-[42px] justify-center pt-[3px]">
        <Fit w={63.5} className="text-[12.500px] text-[#eceef1]">News  Feed</Fit>
      </div>
      <div className="mx-auto flex h-[22.500px] w-[271px] items-center border-b border-[#556070] pt-[1.500px] pl-[2.500px]">
        <MdRssFeed className="size-[11px] text-white" />
        <Fit w={53} className="ml-[5px] text-[9.500px] font-medium text-[#e6e8eb]">Crypto  News</Fit>
        <Fit w={36.5} className="ml-auto text-[12.300px] text-[#858b97]">Search</Fit>
        <MdSearch className="mr-[3px] ml-[47px] size-[14px] -scale-x-100 text-white" />
      </div>
      {stories.map((s, i) => (
        <article key={s.source} className="pl-[11px]">
          <div className={i === 0 ? "pt-[10.500px]" : "pt-[11px]"}>
            {s.lines.map(([t, w]) => (
              <div key={t} className="h-[15.100px] text-[11.300px] leading-[15.100px]"><Fit w={w}>{t}</Fit></div>
            ))}
          </div>
          <div className="mt-[6.500px] flex h-[17px] w-[254px] items-center text-[9.800px] text-[#a9adb5]">
            <Thumb kind={s.thumb} />
            <Fit w={s.sw} className="ml-[5px]">{s.source}</Fit>
            <Fit w={s.tw} className="ml-auto">{s.time}</Fit>
          </div>
          <Divider className="mt-[11.500px] w-[230px]" />
        </article>
      ))}
      <div className="pt-[11px] pl-[11px] text-[11.300px] leading-[15.100px]">
        <div><Fit w={244}>Bitcoin clings to $22K as US dollar strength rises to</Fit></div>
        <div><Fit w={154}>December levels — What’s next?</Fit></div>
      </div>
    </section>
  );
}

/* ---------- laptop drawing ---------- */

const keyRows: { y: number; xs: number[] }[] = [
  { y: 1024, xs: [343, 429, 516, 603, 689, 775.5, 862, 947.5, 1034, 1119, 1205, 1291, 1377] },
  { y: 1028.3, xs: [382, 469, 556, 643, 729.5, 816, 903, 990, 1076, 1163, 1250, 1337, 1423] },
  { y: 1032.6, xs: [400, 487.5, 576, 663, 751, 838.6, 926, 1013, 1101, 1189, 1276.5, 1364] },
  { y: 1037, xs: [442, 530, 619, 707.5, 796, 884, 972.5, 1061, 1149.5, 1238, 1327] },
  { y: 1042, xs: [323, 413.5, 502, 1171, 1261, 1441] },
];

function Laptop() {
  return (
    <svg viewBox="0 0 1764 1206" className="absolute inset-0 size-full">
      <defs>
        <linearGradient id="lid" x1="0" y1="1" x2="1" y2="0">
          <stop offset="0" stopColor="#e4e4e4" />
          <stop offset=".3" stopColor="#e2e2e2" />
          <stop offset=".6" stopColor="#e7e7e7" />
          <stop offset="1" stopColor="#efefef" />
        </linearGradient>
        <linearGradient id="face" x1="0" x2="1" y1="0" y2="0">
          <stop offset="0" stopColor="#f7f7f7" />
          <stop offset=".015" stopColor="#e9e9e9" />
          <stop offset=".04" stopColor="#e2e2e2" />
          <stop offset=".9" stopColor="#e5e5e5" />
          <stop offset=".96" stopColor="#e8e8e8" />
          <stop offset="1" stopColor="#fcfcfc" />
        </linearGradient>
        <linearGradient id="under" x1="0" x2="0" y1="0" y2="1">
          <stop offset="0" stopColor="#000" stopOpacity="0" />
          <stop offset="1" stopColor="#000" stopOpacity=".18" />
        </linearGradient>
        <linearGradient id="hinge" x1="0" x2="0" y1="0" y2="1">
          <stop offset="0" stopColor="#f6f6f6" />
          <stop offset=".3" stopColor="#fefefe" />
          <stop offset=".75" stopColor="#fefefe" />
          <stop offset="1" stopColor="#ebebeb" />
        </linearGradient>
        <linearGradient id="deck" x1="0" x2="0" y1="0" y2="1">
          <stop offset="0" stopColor="#fdfdfd" />
          <stop offset="1" stopColor="#fefefe" />
        </linearGradient>
        <linearGradient id="edgeL" x1="0" x2="1" y1="0" y2="0">
          <stop offset="0" stopColor="#fff" />
          <stop offset="1" stopColor="#f8f8f8" />
        </linearGradient>
        <linearGradient id="shadow" x1="0" x2="1" y1="0" y2="0">
          <stop offset="0" stopColor="#e8e8e8" />
          <stop offset=".1" stopColor="#dcdcdc" />
          <stop offset=".7" stopColor="#e0e0e0" />
          <stop offset="1" stopColor="#f3f3f3" />
        </linearGradient>
      </defs>
      <path d="M176.500 149a60 60 0 0 1 60-60H1527a60 60 0 0 1 60 60V987q-2 17-12 30H188q-9.500-13-11.500-30z" fill="url(#lid)" />
      <circle cx="887" cy="124" r="8.500" fill="#e9e9e9" stroke="#dfdfdf" strokeWidth=".8" />
      <path d="M214 137H1551V974H214z" fill="#f5f5f5" />
      <path d="M214.500 973.500H1550.500V138" fill="none" stroke="#85888e" />
      <path d="M188 1016H1576l14 3 84 50v4H89v-4l88-50z" fill="url(#deck)" />
      <path d="M168 1024 177 1019v18l-14 32H89z" fill="url(#edgeL)" />
      <path d="M1590 1020q20 22 60 36l-34-22z" fill="#f8f8f8" />
      <path d="m248 1021-38 26h14l34-26zM1515 1021l40 26h-15l-36-26z" fill="#f4f4f4" />
      <g stroke="#f7f7f7" strokeWidth="1">
        <path d="M253 1023H1500M248 1027.500H1506M242 1032H1511M238 1036.500H1516M234 1041H1520" />
        <path d="M240 1047.500H1522" stroke="#ececec" />
      </g>
      {keyRows.map((r) =>
        r.xs.map((x) => {
          const lean = (882 - x) * 0.005;
          return (
            <path
              key={`${r.y}-${x}`} fill="#e5e5e5"
              d={`M${x - 7 + lean} ${r.y}h14l${-2 * lean} 4h-14z`}
            />
          );
        }),
      )}
      <path d="M1270 1042h48v1.500h-48zM1452 1042h64v1.500h-64z" fill="#ececec" />
      <path d="M386 1018v-13q1-5 4-5H1374q3 0 4 5v13z" fill="url(#hinge)" />
      <path d="M94 1115q2-5 12-9H1650q10 5 15 9-20 3-60 3H130q-30 0-36-3z" fill="url(#shadow)" />
      <path d="M89 1069q10 3 40 3H1620q40 0 54.500-3v26q-20 14-62 15H151q-40-1-62-15z" fill="url(#face)" />
      <path d="M89 1095H1674.500q-20 14-62 15H151q-40-1-62-15z" fill="url(#under)" />
      <path d="M89 1069q10 3 40 3H1620q40 0 54.500-3" fill="none" stroke="#f2f2f2" />
    </svg>
  );
}

export default function App() {
  return (
    <main className="relative h-[1206px] w-[1764px] overflow-hidden bg-white pt-[138px] pl-[215px] font-['Lato',sans-serif] [font-kerning:none]">
      <Laptop />
      <div className="relative h-[835px] w-[1335px] overflow-hidden bg-[#1e2430]">
        <TitleBar />
        <div className="mt-[46px] ml-[95.500px] flex h-[20px] w-[1142.500px] items-center text-[#8b909b]">
          <EyeIcon />
          <Fit w={44} className="ml-[4.500px] pt-[2px] text-[9.500px]">Watch  List</Fit>
          <ChartIcon className="ml-[13.500px] size-[16px]" />
          <Fit w={49.5} className="ml-[6px] pt-[2px] text-[9.500px]">Multi Charts</Fit>
          <MdRssFeed className="ml-[12.500px] size-[17px]" />
          <Fit w={53} className="ml-[5.500px] pt-[2px] text-[9.500px]">Crypto  News</Fit>
          <MdOutlineSettings className="ml-auto size-[18px]" />
        </div>
        <div className="mt-[17px] ml-[94px] grid grid-cols-[854px_280px] grid-rows-[350px_357px] gap-x-[13px] gap-y-[14px]">
          <WatchList />
          <AssetsPanel />
          <Markets />
          <NewsFeed />
        </div>
      </div>
    </main>
  );
}
